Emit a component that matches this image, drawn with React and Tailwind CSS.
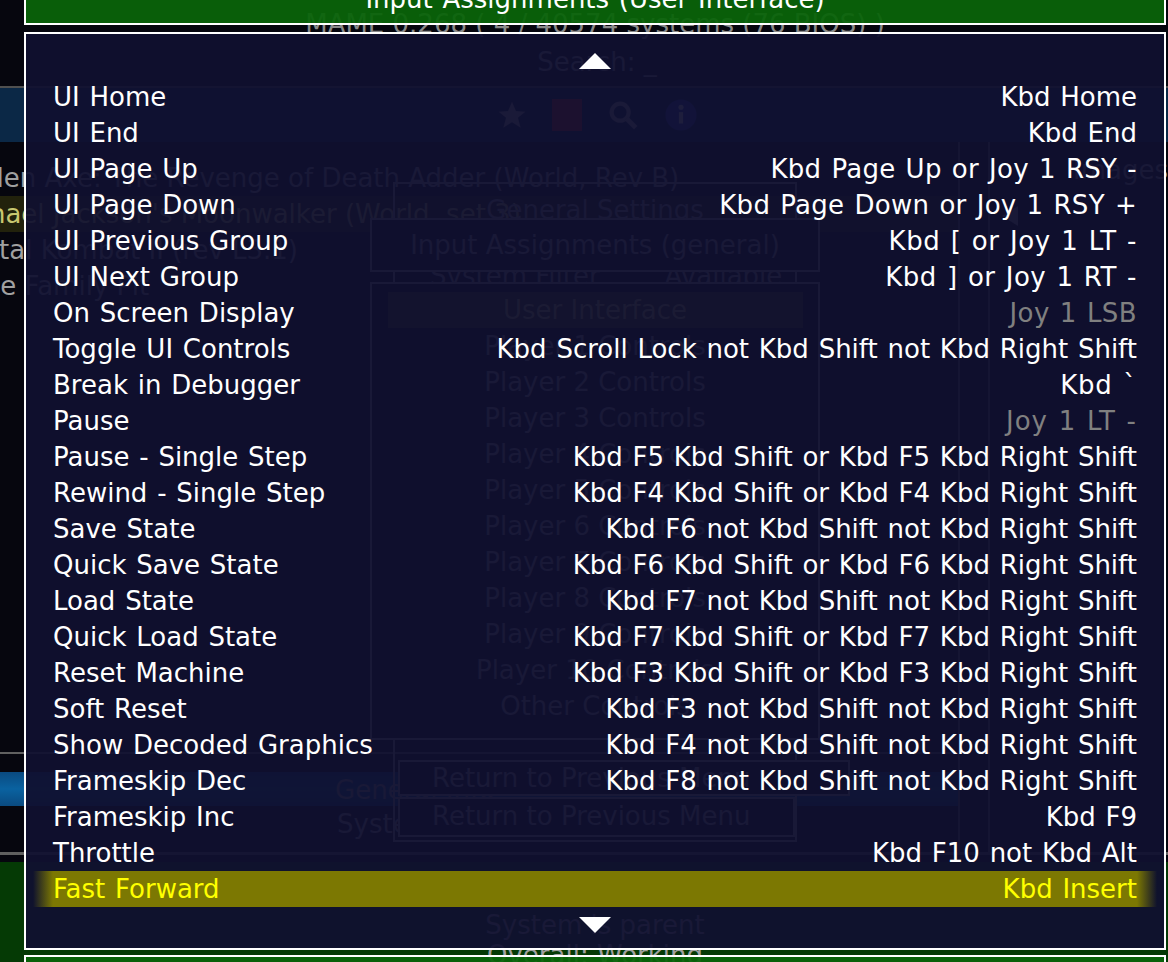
import React from 'react';

// UI Home ... Fast Forward, as listed in the "Input Assignments (User Interface)" menu
// fit: small tracking nudges so the widths follow the emulator's own text renderer
const bindings = [
  { name: 'UI Home', keys: 'Kbd Home' },
  { name: 'UI End', keys: 'Kbd End' },
  { name: 'UI Page Up', keys: 'Kbd Page Up or Joy 1 RSY -', fit: 'tracking-[0.3px]' },
  { name: 'UI Page Down', keys: 'Kbd Page Down or Joy 1 RSY +', fit: 'tracking-[0.3px]' },
  { name: 'UI Previous Group', keys: 'Kbd [ or Joy 1 LT -', fit: 'tracking-[0.6px]' },
  { name: 'UI Next Group', keys: 'Kbd ] or Joy 1 RT -', fit: 'tracking-[0.5px]' },
  { name: 'On Screen Display', keys: 'Joy 1 LSB', off: true, fit: 'tracking-[0.4px]' },
  { name: 'Toggle UI Controls', keys: 'Kbd Scroll Lock not Kbd Shift not Kbd Right Shift' },
  { name: 'Break in Debugger', keys: 'Kbd `', fit: 'tracking-[0.8px]' },
  { name: 'Pause', keys: 'Joy 1 LT -', off: true, fit: 'tracking-[1px]' },
  { name: 'Pause - Single Step', keys: 'Kbd F5 Kbd Shift or Kbd F5 Kbd Right Shift' },
  { name: 'Rewind - Single Step', keys: 'Kbd F4 Kbd Shift or Kbd F4 Kbd Right Shift' },
  { name: 'Save State', keys: 'Kbd F6 not Kbd Shift not Kbd Right Shift' },
  { name: 'Quick Save State', keys: 'Kbd F6 Kbd Shift or Kbd F6 Kbd Right Shift' },
  { name: 'Load State', keys: 'Kbd F7 not Kbd Shift not Kbd Right Shift' },
  { name: 'Quick Load State', keys: 'Kbd F7 Kbd Shift or Kbd F7 Kbd Right Shift' },
  { name: 'Reset Machine', keys: 'Kbd F3 Kbd Shift or Kbd F3 Kbd Right Shift' },
  { name: 'Soft Reset', keys: 'Kbd F3 not Kbd Shift not Kbd Right Shift' },
  { name: 'Show Decoded Graphics', keys: 'Kbd F4 not Kbd Shift not Kbd Right Shift' },
  { name: 'Frameskip Dec', keys: 'Kbd F8 not Kbd Shift not Kbd Right Shift' },
  { name: 'Frameskip Inc', keys: 'Kbd F9' },
  { name: 'Throttle', keys: 'Kbd F10 not Kbd Alt' },
  { name: 'Fast Forward', keys: 'Kbd Insert', selected: true },
];

// the game list behind the menus, scrolled so its left edge is off screen
const games = [
  { title: 'Golden Axe: The Revenge of Death Adder (World, Rev B)', shift: 'ml-[-56px]' },
  { title: "Michael Jackson's Moonwalker (World, set 3)", shift: 'ml-[-55px]', current: true },
  { title: 'Mortal Kombat II (rev L3.1)', shift: 'ml-[-50px]' },
  { title: 'The Family Pit', shift: 'ml-[-32px]' },
];

const players = [1, 2, 3, 4, 5, 6, 7, 8, 9, 10];

const Arrow = ({ down }) => (
  <svg width="32" height="16" viewBox="0 0 32 16">
    <polygon points={down ? '0,0 32,0 16,16' : '16,0 32,16 0,16'} fill="#ffffff" />
  </svg>
);

const Toolbar = () => (
  <div className="shrink-0 h-[54px] bg-[#0b2846] flex items-center gap-[24px] pl-[496px]">
    <svg width="32" height="32" viewBox="0 0 24 24">
      <polygon points="12,2 15,9 22,9.5 16.5,14 18.5,21.5 12,17.5 5.5,21.5 7.5,14 2,9.5 9,9" fill="#b0b0b0" />
    </svg>
    <div className="w-[30px] h-[32px] bg-[#d02020]" />
    <svg width="34" height="34" viewBox="0 0 24 24">
      <circle cx="10" cy="10" r="6" fill="none" stroke="#b0b0b0" strokeWidth="3" />
      <line x1="14.5" y1="14.5" x2="21" y2="21" stroke="#b0b0b0" strokeWidth="3.5" />
    </svg>
    <svg width="34" height="34" viewBox="0 0 24 24">
      <circle cx="12" cy="12" r="11" fill="#3048c8" />
      <rect x="10.5" y="10" width="3" height="8" fill="#ffffff" />
      <circle cx="12" cy="6.5" r="1.8" fill="#ffffff" />
    </svg>
  </div>
);

// the main menu windows, stacked over the game list
const MenuWindows = () => (
  <>
    <div className="absolute left-[393px] top-[182px] w-[404px] h-[660px] border-2 border-[#a0a0a0] flex flex-col pt-[8px]">
      <div className="text-center">General Settings</div>
      <div className="mt-[30px] flex gap-[65px] pl-[35px]">
        <span>System Filter</span>
        <span>Available</span>
      </div>
    </div>
    <div className="absolute left-[370px] top-[218px] flex flex-col">
      <div className="w-[450px] h-[54px] border-2 border-[#a0a0a0] bg-[#06060e] flex items-center justify-center">
        Input Assignments (general)
      </div>
      <div className="mt-[10px] w-[450px] h-[458px] border-2 border-[#a0a0a0] bg-[#06060e] flex flex-col items-center pt-[8px]">
        <div className="w-[415px] h-[36px] bg-[#404010] text-center text-[#c8c870]">User Interface</div>
        {players.map((p) => (
          <div key={p} className="h-[36px]">Player {p} Controls</div>
        ))}
        <div className="h-[36px]">Other Controls</div>
      </div>
      <div className="mt-[20px] ml-[28px] w-[452px] h-[36px] border-2 border-[#a0a0a0] bg-[#06060e] pl-[32px] leading-[32px]">
        Return to Previous Menu
      </div>
      <div className="mt-[1px] ml-[28px] w-[397px] h-[40px] border-2 border-[#a0a0a0] bg-[#06060e] pl-[32px] leading-[34px]">
        Return to Previous Menu
      </div>
    </div>
  </>
);

// everything behind the current menu, seen through its translucent boxes
const Underlay = () => (
  <div className="absolute inset-0 flex flex-col whitespace-nowrap text-[#a0a0a0]">
    <div className="shrink-0 h-[86px] flex flex-col items-center pt-[6px] pl-[22px]">
      <div className="text-[#8a8a8a]">MAME 0.268 ( 4 / 40574 systems (76 BIOS) )</div>
      <div className="mt-[2px] pl-[4px]">Search: _</div>
    </div>
    <div className="shrink-0 h-[2px] bg-[#505050]" />
    <Toolbar />

    <div className="shrink-0 h-[710px] flex">
      <div className="w-[970px] flex flex-col pt-[18px]">
        {games.map((g) => (
          <div key={g.title} className={`h-[36px] ${g.current ? 'bg-[#22220c]' : ''}`}>
            <div className={`${g.shift} ${g.current ? 'text-[#c8c870]' : ''}`}>{g.title}</div>
          </div>
        ))}
        <div className="flex-1" />
        <div className="h-[2px] bg-[#606060]" />
        <div className="mt-[18px] h-[34px] bg-[linear-gradient(180deg,#0a4a80,#0a62a0,#0a4a80)] pl-[335px] leading-[36px]">
          General Info
        </div>
        <div className="h-[36px] pl-[337px]">System Information</div>
        <div className="h-[10px]" />
      </div>
      <div className="w-[2px] bg-[#606060]" />
      <div className="w-[28px]" />
      <div className="w-[2px] bg-[#606060]" />
      <div className="flex-1 flex flex-col pt-[10px]">
        <div className="pl-[83px]">Images</div>
        <svg className="mt-[18px] ml-[12px]" width="16" height="20" viewBox="0 0 16 20">
          <polygon points="16,0 16,20 0,10" fill="#a0a0a0" />
        </svg>
      </div>
    </div>

    <div className="shrink-0 h-[3px] bg-[#606060]" />
    <div className="shrink-0 h-[7px]" />
    <div className="flex-1 min-h-0 overflow-hidden bg-[#053a05] flex flex-col items-center pt-[48px] pl-[22px] leading-[30px]">
      <div className="shrink-0">System is parent</div>
      <div className="shrink-0">Overall: Working</div>
    </div>

    <MenuWindows />
  </div>
);

export default function App() {
  return (
    <div className="relative w-[1168px] h-[962px] overflow-hidden bg-[#06060e] font-['DejaVu_Sans','Noto_Sans',sans-serif] text-[26px] leading-[36px]">
      <Underlay />

      <div className="relative flex flex-col pl-[24px] [word-spacing:1.5px]">
        <div className="-mt-[28px] w-[1142px] h-[53px] border-2 border-white bg-[#0a640a]/94 flex items-center justify-center text-white whitespace-nowrap">
          Input Assignments (User Interface)
        </div>

        <div className="mt-[7px] w-[1142px] h-[918px] border-2 border-white bg-[#101030]/94 flex flex-col pt-[9px] px-[7px]">
          <div className="h-[36px] flex items-center justify-center">
            <Arrow />
          </div>
          {bindings.map((b) => (
            <div
              key={b.name}
              className={`h-[36px] flex items-center justify-between px-[20px] whitespace-nowrap ${
                b.selected
                  ? 'text-[#ffff00] bg-[linear-gradient(90deg,transparent,#7c7802_20px,#7c7802_calc(100%_-_20px),transparent)]'
                  : 'text-white'
              }`}
            >
              <span>{b.name}</span>
              <span className={`${b.off ? 'text-[#808080]' : ''} ${b.fit || ''}`}>{b.keys}</span>
            </div>
          ))}
          <div className="h-[36px] flex items-center justify-center">
            <Arrow down />
          </div>
        </div>

        <div className="mt-[5px] w-[1142px] h-[40px] border-2 border-white bg-[#0a640a]/94" />
      </div>
    </div>
  );
}
